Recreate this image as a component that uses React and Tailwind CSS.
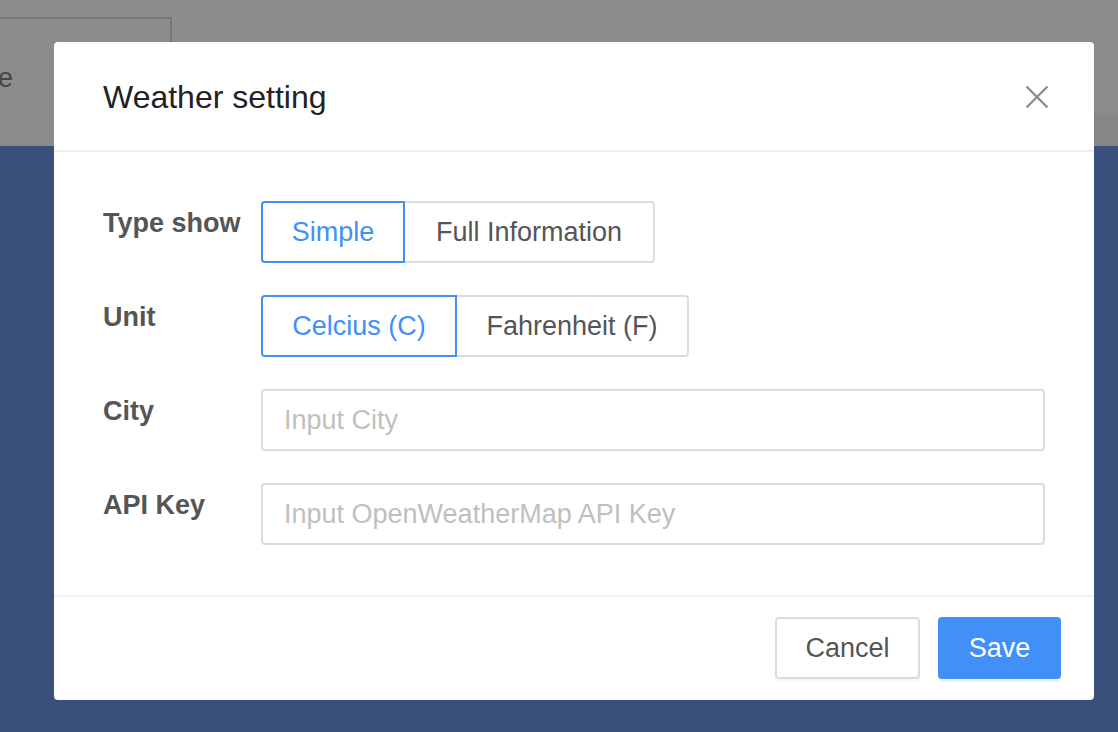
import React from "react";

const font = { fontFamily: '"Liberation Sans", Arial, sans-serif' };

const Segmented = ({ options, active }) => (
  <div className="flex h-[62px]">
    {options.map((o, i) => {
      const on = i === active;
      return (
        <button
          key={o.label}
          className={`${o.w} h-full border-2 text-[27px] ${on ? "border-[#4090f7] text-[#4090f7]" : "border-[#dcdcdc] text-[#555]"} ${i === 0 ? "rounded-l-[4px]" : "border-l-0"} ${i === options.length - 1 ? "rounded-r-[4px]" : ""} bg-white`}
        >
          {o.label}
        </button>
      );
    })}
  </div>
);

const Row = ({ label, children }) => (
  <div className="flex h-[62px]">
    <div className="w-[158px] shrink-0 pt-[9px] text-[27px] leading-none font-bold text-[#555]">{label}</div>
    <div className="flex-1">{children}</div>
  </div>
);

const Field = ({ placeholder }) => (
  <input
    type="text"
    placeholder={placeholder}
    className="w-full h-[62px] border-2 border-[#dcdcdc] rounded-[4px] pl-[21px] text-[27px] text-[#555] placeholder:text-[#bfbfbf] focus:outline-none"
  />
);

export default function App() {
  return (
    <div className="relative w-full h-[732px] overflow-hidden bg-[#3b4f7d]" style={font}>
      {/* dimmed page behind the dialog */}
      <div className="relative h-[146px] bg-[#8c8c8c] overflow-hidden">
        <div className="absolute left-[-30px] top-[17px] w-[202px] h-[160px] border-2 border-[#777]"></div>
        <div className="absolute left-[-2px] top-[58px] text-[27px] text-[#454545]">e</div>
        <div className="absolute right-0 top-[113px] w-[24px] h-[33px] bg-[#868686]"></div>
      </div>

      {/* dialog */}
      <div className="absolute left-[54px] top-[42px] w-[1040px] h-[658px] bg-white rounded-[4px] flex flex-col">
        <div className="h-[110px] shrink-0 flex items-center justify-between pl-[49px] pr-[45px] border-b-2 border-[#f0f0f0]">
          <h1 className="text-[32px] text-[#222] pt-[2px]">Weather setting</h1>
          <svg width="24" height="24" viewBox="0 0 24 24" className="text-[#8a8a8a] mt-[2px]">
            <path d="M1.5 1.5 L22.5 22.5 M22.5 1.5 L1.5 22.5" stroke="currentColor" strokeWidth="2.2" fill="none" />
          </svg>
        </div>

        <div className="flex flex-col gap-[32px] pt-[49px] pb-[50px] pl-[49px] pr-[49px] border-b-2 border-[#f0f0f0]">
          <Row label="Type show">
            <Segmented
              active={0}
              options={[
                { label: "Simple", w: "w-[144px]" },
                { label: "Full Information", w: "w-[250px]" },
              ]}
            />
          </Row>
          <Row label="Unit">
            <Segmented
              active={0}
              options={[
                { label: "Celcius (C)", w: "w-[196px]" },
                { label: "Fahrenheit (F)", w: "w-[232px]" },
              ]}
            />
          </Row>
          <Row label="City">
            <Field placeholder="Input City" />
          </Row>
          <Row label="API Key">
            <Field placeholder="Input OpenWeatherMap API Key" />
          </Row>
        </div>

        <div className="flex justify-end items-start gap-[18px] pt-[20px] pr-[33px]">
          <button className="w-[145px] h-[62px] border-2 border-[#dcdcdc] rounded-[4px] bg-white text-[27px] text-[#555] shadow-[0_3px_0_rgba(0,0,0,0.03)]">
            Cancel
          </button>
          <button className="w-[123px] h-[62px] rounded-[4px] bg-[#4090f7] text-[27px] text-white shadow-[0_3px_0_rgba(0,0,0,0.05)]">
            Save
          </button>
        </div>
      </div>
    </div>
  );
}
